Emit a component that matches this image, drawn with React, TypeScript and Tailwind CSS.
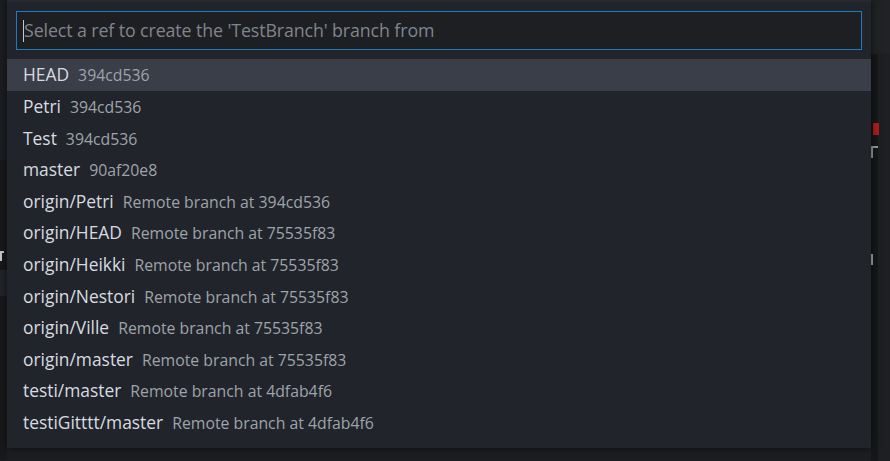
import React from "react";

const items: [string, string][] = [
  ["HEAD", "394cd536"],
  ["Petri", "394cd536"],
  ["Test", "394cd536"],
  ["master", "90af20e8"],
  ["origin/Petri", "Remote branch at 394cd536"],
  ["origin/HEAD", "Remote branch at 75535f83"],
  ["origin/Heikki", "Remote branch at 75535f83"],
  ["origin/Nestori", "Remote branch at 75535f83"],
  ["origin/Ville", "Remote branch at 75535f83"],
  ["origin/master", "Remote branch at 75535f83"],
  ["testi/master", "Remote branch at 4dfab4f6"],
  ["testiGitttt/master", "Remote branch at 4dfab4f6"],
];

export default function App() {
  return (
    <div
      className="relative w-[890px] h-[461px] overflow-hidden bg-[#1c1e22] flex"
      style={{ fontFamily: '"Open Sans", "Noto Sans", sans-serif' }}
    >
      {/* left background strip */}
      <div className="w-[7px] h-full bg-[#1b1d21] relative">
        <div className="absolute left-0 top-[160px] w-[7px] h-[300px] bg-[#18191c]" />
        <div className="absolute left-0 top-[251px] w-[4px] h-[2px] bg-[#c8c8c8]" />
        <div className="absolute left-0 top-[251px] w-[2px] h-[10px] bg-[#c8c8c8]" />
        <div className="absolute left-0 top-[270px] w-[7px] h-[26px] bg-[#242529]" />
      </div>

      {/* quick pick panel */}
      <div className="w-[864px] h-[448px] bg-[#21252b] shadow-[0_0_8px_rgba(0,0,0,0.6)] flex flex-col z-10">
        <div className="h-[2px] bg-[#26292f]" />
        <div className="px-[9px] pt-[9px] pb-[9px]">
          <div className="h-[39px] border border-[#1f7ac0] bg-[#1d1f23] flex items-center pl-[6px]">
            <div className="w-px h-[22px] bg-[#c8c8c8]" />
            <span className="text-[17.8px] text-[#80858d] tracking-[-0.1px]">
              Select a ref to create the 'TestBranch' branch from
            </span>
          </div>
        </div>
        <div className="flex flex-col">
          {items.map(([label, desc], i) => (
            <div
              key={label}
              className={`h-[31.6px] flex items-center pl-[16px] ${
                i === 0 ? "bg-[#393e48]" : ""
              }`}
            >
              <div className="flex items-baseline gap-[9px]">
                <span className="text-[17.4px] text-[#d8dbe0]">{label}</span>
                <span className="text-[15.8px] text-[#9fa3aa]">{desc}</span>
              </div>
            </div>
          ))}
        </div>
      </div>

      {/* right background strip */}
      <div className="flex-1 h-full relative flex">
        <div className="w-[7px] h-full bg-[#161719]" />
        <div className="flex-1 h-full bg-[#1e1f23]" />
        <div className="absolute left-0 top-0 w-[19px] h-[54px] bg-[#202226]" />
        <div className="absolute left-[2px] top-[123px] w-[6px] h-[12px] bg-[#b01c1c]" />
        <div className="absolute left-0 top-[146px] w-[7px] h-[2px] bg-[#9a9a9a]" />
        <div className="absolute left-0 top-[146px] w-[2px] h-[12px] bg-[#9a9a9a]" />
        <div className="absolute left-0 top-[254px] w-[2px] h-[11px] bg-[#aaa]" />
      </div>
    </div>
  );
}
